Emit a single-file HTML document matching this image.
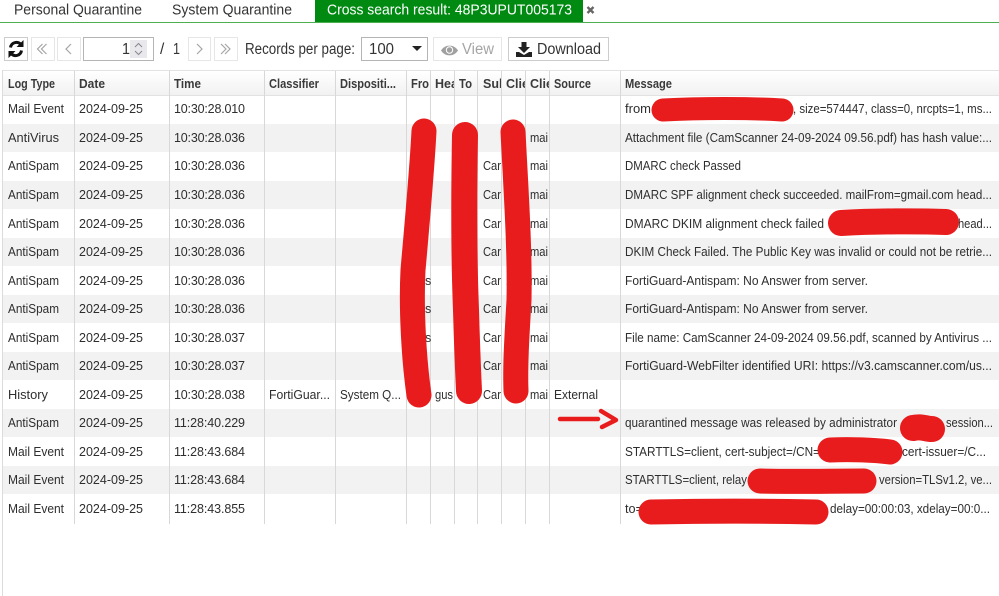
<!DOCTYPE html>
<html><head><meta charset="utf-8"><title>Cross search result</title>
<style>
html,body{margin:0;padding:0;background:#fff;width:999px;height:596px;overflow:hidden}
svg{display:block}
#p{filter:blur(.3px)}
text{font-family:"Liberation Sans",sans-serif;font-size:12.5px;fill:#2e2e2e;white-space:pre}
.h{font-weight:bold;fill:#3a3a3a;font-size:12.5px}
.tab{font-size:15px;fill:#333}
.tb{font-size:15.5px;fill:#333}
.blob{fill:none;stroke:#e81c1c;stroke-linecap:round;stroke-linejoin:round}
</style></head><body>
<svg id="p" width="999" height="596" viewBox="0 0 999 596" xmlns="http://www.w3.org/2000/svg">
<defs><linearGradient id="hd" x1="0" y1="0" x2="0" y2="1"><stop offset="0" stop-color="#ffffff"/><stop offset="1" stop-color="#f1f1f1"/></linearGradient></defs>
<rect width="999" height="596" fill="#fff"/>
<!-- tabs -->
<rect x="315" y="0" width="268" height="22" fill="#008a12"/>
<rect x="0" y="22" width="999" height="1" fill="#4caf50"/>
<text class="tab" x="14" y="14.500" textLength="128" lengthAdjust="spacingAndGlyphs">Personal Quarantine</text>
<text class="tab" x="172" y="14.500" textLength="120" lengthAdjust="spacingAndGlyphs">System Quarantine</text>
<text class="tab" x="327" y="14.500" textLength="245" lengthAdjust="spacingAndGlyphs" style="fill:#fff">Cross search result: 48P3UPUT005173</text>
<path d="M587.500 7l6 6M593.500 7l-6 6" stroke="#666" stroke-width="2.400" fill="none"/>
<!-- toolbar -->
<rect x="4.500" y="37.500" width="23" height="23" fill="#fff" stroke="#ccc"/>
<path d="M10.500 47.500a6 6 0 0 1 10-3.500M21.500 50.500a6 6 0 0 1-10 3.500" fill="none" stroke="#111" stroke-width="3"/>
<path d="M23.500 40v7h-7zM8.500 58v-7h7z" fill="#111"/>
<rect x="31.500" y="37.500" width="23" height="23" fill="#fff" stroke="#e6e6e6"/>
<path d="M42.500 44l-5 5 5 5M46.500 44l-5 5 5 5" fill="none" stroke="#a5a5a5" stroke-width="1.200"/>
<rect x="57.500" y="37.500" width="23" height="23" fill="#fff" stroke="#e6e6e6"/>
<path d="M71 44l-5 5 5 5" fill="none" stroke="#a5a5a5" stroke-width="1.200"/>
<rect x="83.500" y="37.500" width="70" height="23" fill="#fff" stroke="#b5b5b5"/>
<rect x="130" y="40" width="17" height="18" fill="#e9e9ed"/>
<path d="M135 47l3.500-3.500 3.500 3.500M135 51l3.500 3.500 3.500-3.500" fill="none" stroke="#888" stroke-width="1"/>
<text class="tb" x="122" y="54" textLength="8" lengthAdjust="spacingAndGlyphs">1</text>
<text class="tb" x="160" y="54">/</text>
<text class="tb" x="173" y="54" textLength="7" lengthAdjust="spacingAndGlyphs">1</text>
<rect x="188.500" y="37.500" width="22" height="23" fill="#fff" stroke="#e6e6e6"/>
<path d="M197 44l5 5-5 5" fill="none" stroke="#a5a5a5" stroke-width="1.200"/>
<rect x="214.500" y="37.500" width="23" height="23" fill="#fff" stroke="#e6e6e6"/>
<path d="M221 44l5 5-5 5M225 44l5 5-5 5" fill="none" stroke="#a5a5a5" stroke-width="1.200"/>
<text class="tb" x="245" y="54" textLength="110" lengthAdjust="spacingAndGlyphs">Records per page:</text>
<rect x="361.500" y="37.500" width="66" height="23" fill="#fff" stroke="#b5b5b5"/>
<text class="tb" x="369" y="54" textLength="25" lengthAdjust="spacingAndGlyphs">100</text>
<path d="M412 46h10l-5 5z" fill="#222"/>
<rect x="433.500" y="37.500" width="68" height="23" fill="#fff" stroke="#e6e6e6"/>
<path d="M441 50.500c4-6.500 13-6.500 17 0c-4 6.500-13 6.500-17 0z" fill="#a0a0a0"/>
<circle cx="449.500" cy="50" r="3.200" fill="#a0a0a0" stroke="#fff" stroke-width="1"/>
<text class="tb" x="462" y="54" textLength="32" lengthAdjust="spacingAndGlyphs" style="fill:#a5a5a5">View</text>
<rect x="508.500" y="37.500" width="100" height="23" fill="#fff" stroke="#ccc"/>
<path d="M521.500 42h5v5h3.500l-6 6-6-6h3.500z" fill="#222"/>
<path d="M516 52h3l5 3 5-3h3v5h-16z" fill="#222"/>
<text class="tb" x="537" y="54" textLength="64" lengthAdjust="spacingAndGlyphs">Download</text>
<!-- table header -->
<rect x="3" y="71" width="996" height="24" fill="url(#hd)"/>
<rect x="3" y="70" width="996" height="1" fill="#e2e2e2"/>
<rect x="3" y="95" width="996" height="1" fill="#e2e2e2"/>
<!-- stripes -->
<g fill="#f2f2f2">
<rect x="3" y="124" width="996" height="28"/>
<rect x="3" y="181" width="996" height="28"/>
<rect x="3" y="238" width="996" height="28"/>
<rect x="3" y="295" width="996" height="28"/>
<rect x="3" y="352" width="996" height="28"/>
<rect x="3" y="409" width="996" height="28"/>
<rect x="3" y="466" width="996" height="28"/>
</g>
<rect x="2" y="70" width="1" height="526" fill="#dcdcdc"/>
<g fill="#d8d8d8">
<rect x="74" y="71" width="1" height="453"/>
<rect x="169" y="71" width="1" height="453"/>
<rect x="264" y="71" width="1" height="453"/>
<rect x="335" y="71" width="1" height="453"/>
<rect x="406" y="71" width="1" height="453"/>
<rect x="430" y="71" width="1" height="453"/>
<rect x="454" y="71" width="1" height="453"/>
<rect x="477" y="71" width="1" height="453"/>
<rect x="501" y="71" width="1" height="453"/>
<rect x="525" y="71" width="1" height="453"/>
<rect x="549" y="71" width="1" height="453"/>
<rect x="620" y="71" width="1" height="453"/>
</g>
<!-- header labels -->
<text class="h" x="8" y="88" textLength="47" lengthAdjust="spacingAndGlyphs">Log Type</text>
<text class="h" x="79" y="88" textLength="26" lengthAdjust="spacingAndGlyphs">Date</text>
<text class="h" x="174" y="88" textLength="27" lengthAdjust="spacingAndGlyphs">Time</text>
<text class="h" x="269" y="88" textLength="50" lengthAdjust="spacingAndGlyphs">Classifier</text>
<text class="h" x="340" y="88" textLength="56" lengthAdjust="spacingAndGlyphs">Dispositi...</text>
<text class="h" x="411" y="88" textLength="18" lengthAdjust="spacingAndGlyphs">Fro</text>
<svg x="431" y="71" width="23" height="24"><text class="h" x="4" y="17">Hea</text></svg>
<text class="h" x="459" y="88" textLength="13" lengthAdjust="spacingAndGlyphs">To</text>
<svg x="478" y="71" width="23" height="24"><text class="h" x="5" y="17">Sub</text></svg>
<svg x="502" y="71" width="23" height="24"><text class="h" x="4" y="17">Clie</text></svg>
<svg x="526" y="71" width="23" height="24"><text class="h" x="4" y="17">Clie</text></svg>
<text class="h" x="554" y="88" textLength="37" lengthAdjust="spacingAndGlyphs">Source</text>
<text class="h" x="625" y="88" textLength="47" lengthAdjust="spacingAndGlyphs">Message</text>
<!-- log type -->
<text x="8" y="113" textLength="56" lengthAdjust="spacingAndGlyphs">Mail Event</text>
<text x="8" y="142" textLength="51" lengthAdjust="spacingAndGlyphs">AntiVirus</text>
<text x="8" y="170" textLength="51" lengthAdjust="spacingAndGlyphs">AntiSpam</text>
<text x="8" y="199" textLength="51" lengthAdjust="spacingAndGlyphs">AntiSpam</text>
<text x="8" y="228" textLength="51" lengthAdjust="spacingAndGlyphs">AntiSpam</text>
<text x="8" y="256" textLength="51" lengthAdjust="spacingAndGlyphs">AntiSpam</text>
<text x="8" y="285" textLength="51" lengthAdjust="spacingAndGlyphs">AntiSpam</text>
<text x="8" y="313" textLength="51" lengthAdjust="spacingAndGlyphs">AntiSpam</text>
<text x="8" y="342" textLength="51" lengthAdjust="spacingAndGlyphs">AntiSpam</text>
<text x="8" y="370" textLength="51" lengthAdjust="spacingAndGlyphs">AntiSpam</text>
<text x="8" y="399" textLength="40" lengthAdjust="spacingAndGlyphs">History</text>
<text x="8" y="427" textLength="51" lengthAdjust="spacingAndGlyphs">AntiSpam</text>
<text x="8" y="456" textLength="56" lengthAdjust="spacingAndGlyphs">Mail Event</text>
<text x="8" y="484" textLength="56" lengthAdjust="spacingAndGlyphs">Mail Event</text>
<text x="8" y="513" textLength="56" lengthAdjust="spacingAndGlyphs">Mail Event</text>
<!-- date -->
<text x="79" y="113" textLength="64">2024-09-25</text>
<text x="79" y="142" textLength="64">2024-09-25</text>
<text x="79" y="170" textLength="64">2024-09-25</text>
<text x="79" y="199" textLength="64">2024-09-25</text>
<text x="79" y="228" textLength="64">2024-09-25</text>
<text x="79" y="256" textLength="64">2024-09-25</text>
<text x="79" y="285" textLength="64">2024-09-25</text>
<text x="79" y="313" textLength="64">2024-09-25</text>
<text x="79" y="342" textLength="64">2024-09-25</text>
<text x="79" y="370" textLength="64">2024-09-25</text>
<text x="79" y="399" textLength="64">2024-09-25</text>
<text x="79" y="427" textLength="64">2024-09-25</text>
<text x="79" y="456" textLength="64">2024-09-25</text>
<text x="79" y="484" textLength="64">2024-09-25</text>
<text x="79" y="513" textLength="64">2024-09-25</text>
<!-- time -->
<text x="174" y="113" textLength="71">10:30:28.010</text>
<text x="174" y="142" textLength="71">10:30:28.036</text>
<text x="174" y="170" textLength="71">10:30:28.036</text>
<text x="174" y="199" textLength="71">10:30:28.036</text>
<text x="174" y="228" textLength="71">10:30:28.036</text>
<text x="174" y="256" textLength="71">10:30:28.036</text>
<text x="174" y="285" textLength="71">10:30:28.036</text>
<text x="174" y="313" textLength="71">10:30:28.036</text>
<text x="174" y="342" textLength="71">10:30:28.037</text>
<text x="174" y="370" textLength="71">10:30:28.037</text>
<text x="174" y="399" textLength="71">10:30:28.038</text>
<text x="174" y="427" textLength="71">11:28:40.229</text>
<text x="174" y="456" textLength="71">11:28:43.684</text>
<text x="174" y="484" textLength="71">11:28:43.684</text>
<text x="174" y="513" textLength="71">11:28:43.855</text>
<!-- history row -->
<text x="269" y="399" textLength="61" lengthAdjust="spacingAndGlyphs">FortiGuar...</text>
<text x="340" y="399" textLength="61" lengthAdjust="spacingAndGlyphs">System Q...</text>
<text x="435" y="399" textLength="18" lengthAdjust="spacingAndGlyphs">gus</text>
<text x="554" y="399" textLength="44" lengthAdjust="spacingAndGlyphs">External</text>
<!-- narrow columns -->
<text x="425" y="285">s</text><text x="425" y="313">s</text><text x="425" y="342">s</text>
<text x="483" y="170" textLength="18" lengthAdjust="spacingAndGlyphs">Car</text><text x="483" y="199" textLength="18" lengthAdjust="spacingAndGlyphs">Car</text><text x="483" y="228" textLength="18" lengthAdjust="spacingAndGlyphs">Car</text><text x="483" y="256" textLength="18" lengthAdjust="spacingAndGlyphs">Car</text><text x="483" y="285" textLength="18" lengthAdjust="spacingAndGlyphs">Car</text><text x="483" y="313" textLength="18" lengthAdjust="spacingAndGlyphs">Car</text><text x="483" y="342" textLength="18" lengthAdjust="spacingAndGlyphs">Car</text><text x="483" y="370" textLength="18" lengthAdjust="spacingAndGlyphs">Car</text><text x="483" y="399" textLength="18" lengthAdjust="spacingAndGlyphs">Car</text>
<text x="506" y="285">2</text><text x="506" y="313">2</text><text x="506" y="342">2</text>
<text x="530" y="142" textLength="18" lengthAdjust="spacingAndGlyphs">mai</text><text x="530" y="170" textLength="18" lengthAdjust="spacingAndGlyphs">mai</text><text x="530" y="199" textLength="18" lengthAdjust="spacingAndGlyphs">mai</text><text x="530" y="228" textLength="18" lengthAdjust="spacingAndGlyphs">mai</text><text x="530" y="256" textLength="18" lengthAdjust="spacingAndGlyphs">mai</text><text x="530" y="285" textLength="18" lengthAdjust="spacingAndGlyphs">mai</text><text x="530" y="313" textLength="18" lengthAdjust="spacingAndGlyphs">mai</text><text x="530" y="342" textLength="18" lengthAdjust="spacingAndGlyphs">mai</text><text x="530" y="370" textLength="18" lengthAdjust="spacingAndGlyphs">mai</text><text x="530" y="399" textLength="18" lengthAdjust="spacingAndGlyphs">mai</text>
<!-- messages -->
<text x="625" y="113" textLength="26" lengthAdjust="spacingAndGlyphs">from</text>
<text x="793" y="113" textLength="199" lengthAdjust="spacingAndGlyphs">, size=574447, class=0, nrcpts=1, ms...</text>
<text x="625" y="142" textLength="367" lengthAdjust="spacingAndGlyphs">Attachment file (CamScanner 24-09-2024 09.56.pdf) has hash value:...</text>
<text x="625" y="170" textLength="116" lengthAdjust="spacingAndGlyphs">DMARC check Passed</text>
<text x="625" y="199" textLength="367" lengthAdjust="spacingAndGlyphs">DMARC SPF alignment check succeeded. mailFrom=gmail.com head...</text>
<text x="625" y="228" textLength="199" lengthAdjust="spacingAndGlyphs">DMARC DKIM alignment check failed</text>
<text x="958" y="228" textLength="34" lengthAdjust="spacingAndGlyphs">head...</text>
<text x="625" y="256" textLength="367" lengthAdjust="spacingAndGlyphs">DKIM Check Failed. The Public Key was invalid or could not be retrie...</text>
<text x="625" y="285" textLength="243" lengthAdjust="spacingAndGlyphs">FortiGuard-Antispam: No Answer from server.</text>
<text x="625" y="313" textLength="243" lengthAdjust="spacingAndGlyphs">FortiGuard-Antispam: No Answer from server.</text>
<text x="625" y="342" textLength="367" lengthAdjust="spacingAndGlyphs">File name: CamScanner 24-09-2024 09.56.pdf, scanned by Antivirus ...</text>
<text x="625" y="370" textLength="367" lengthAdjust="spacingAndGlyphs">FortiGuard-WebFilter identified URI: https://v3.camscanner.com/us...</text>
<text x="625" y="427" textLength="272" lengthAdjust="spacingAndGlyphs">quarantined message was released by administrator</text>
<text x="946" y="427" textLength="47" lengthAdjust="spacingAndGlyphs">session...</text>
<text x="625" y="456" textLength="195" lengthAdjust="spacingAndGlyphs">STARTTLS=client, cert-subject=/CN=</text>
<text x="902" y="456" textLength="84" lengthAdjust="spacingAndGlyphs">cert-issuer=/C...</text>
<text x="625" y="484" textLength="122" lengthAdjust="spacingAndGlyphs">STARTTLS=client, relay</text>
<text x="879" y="484" textLength="113" lengthAdjust="spacingAndGlyphs">version=TLSv1.2, ve...</text>
<text x="625" y="513" textLength="18" lengthAdjust="spacingAndGlyphs">to=</text>
<text x="830" y="513" textLength="160" lengthAdjust="spacingAndGlyphs">delay=00:00:03, xdelay=00:0...</text>
<!-- red redactions -->
<path class="blob" stroke-width="25" d="M424 131C422 170 417 225 413 270C411 310 414 360 419 395"/>
<path class="blob" stroke-width="26" d="M465 135C464 190 464 260 466 310C467 345 468 370 469 391"/>
<path class="blob" stroke-width="25" d="M513 132C516 190 520 250 519 300C517 335 515 365 516 391"/>
<path class="blob" stroke-width="23" d="M663 110C700 108 750 108 782 110"/>
<path class="blob" stroke-width="26" d="M841 223C875 221 920 221 946 222"/>
<path class="blob" stroke-width="26" d="M913 428C922 426 925 429 932 429"/>
<path class="blob" stroke-width="25" d="M830 450C850 449 875 450 890 452"/>
<path class="blob" stroke-width="25" d="M760 481C790 482 830 481 864 481"/>
<path class="blob" stroke-width="25" d="M651 512C700 511 770 511 816 512"/>
<path class="blob" stroke-width="4.500" d="M560 419H598M601 411L616 420L602 427"/>
</svg>
</body></html>
